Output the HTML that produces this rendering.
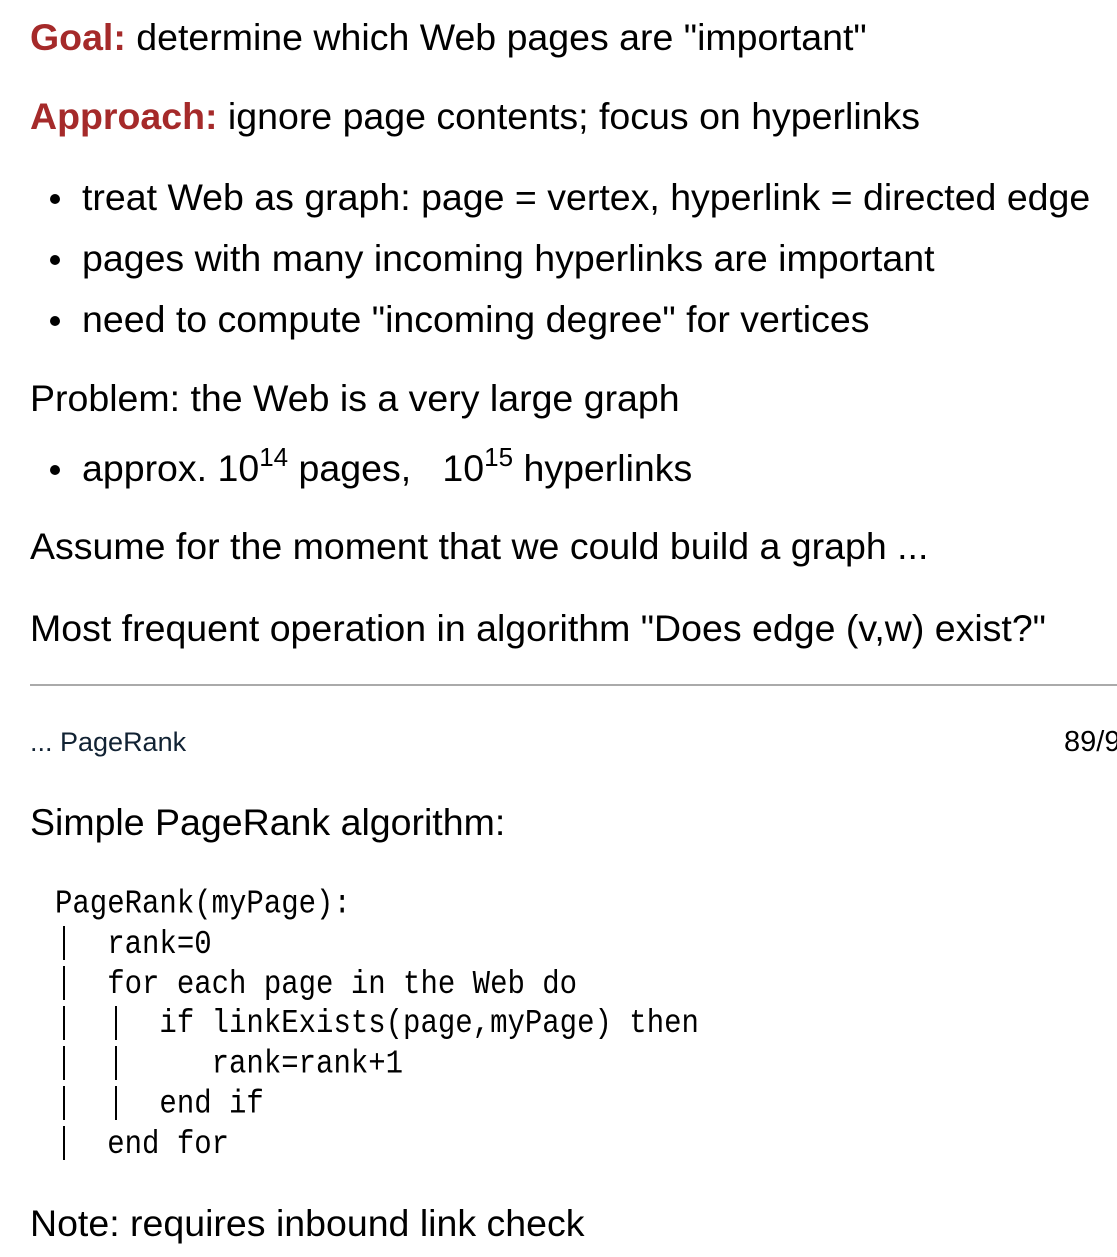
<!DOCTYPE html>
<html><head><meta charset="utf-8"><style>
html,body{margin:0;padding:0;background:#fff;width:1117px;height:1257px;overflow:hidden;position:relative}
.l{position:absolute;white-space:nowrap;font-family:"Liberation Sans","Noto Sans CJK SC",sans-serif;font-size:37.5px;line-height:40px;color:#000}
.r{color:#a52a2a;font-weight:bold}
.b{position:absolute;width:10px;height:10px;border-radius:50%;background:#000}
.c{position:absolute;white-space:pre;font-family:"Liberation Mono",monospace;font-size:29px;line-height:40px;color:#000;transform:scaleY(1.15);transform-origin:0 0}
.p{position:absolute;width:2px;height:34px;background:#000}
sup{font-size:26px;line-height:0;vertical-align:15px}
</style></head><body>
<div class="l" style="left:30px;top:17px"><span class="r">Goal:</span> determine which Web pages are "important"</div>
<div class="l" style="left:30px;top:96px"><span class="r">Approach:</span> ignore page contents; focus on hyperlinks</div>
<div class="b" style="left:50px;top:194px"></div>
<div class="l" style="left:82px;top:177px">treat Web as graph: page = vertex, hyperlink = directed edge</div>
<div class="b" style="left:50px;top:255px"></div>
<div class="l" style="left:82px;top:238px">pages with many incoming hyperlinks are important</div>
<div class="b" style="left:50px;top:316px"></div>
<div class="l" style="left:82px;top:299px">need to compute "incoming degree" for vertices</div>
<div class="l" style="left:30px;top:378px">Problem: the Web is a very large graph</div>
<div class="b" style="left:50px;top:465px"></div>
<div class="l" style="left:82px;top:448px">approx. 10<sup>14</sup> pages, &nbsp; 10<sup>15</sup> hyperlinks</div>
<div class="l" style="left:30px;top:526px">Assume for the moment that we could build a graph ...</div>
<div class="l" style="left:30px;top:608px">Most frequent operation in algorithm "Does edge (v,w) exist?"</div>
<div style="position:absolute;left:30px;right:0;top:684px;height:2px;background:#aaa"></div>
<div class="l" style="left:30px;top:727px;font-size:27px;line-height:30px;color:#123">... PageRank</div>
<div class="l" style="left:1064px;top:727px;font-size:29px;line-height:30px">89/9</div>
<div class="l" style="left:30px;top:802px">Simple PageRank algorithm:</div>
<div class="c" style="left:55px;top:885px;line-height:34.8px">PageRank(myPage):
   rank=0
   for each page in the Web do
      if linkExists(page,myPage) then
         rank=rank+1
      end if
   end for</div>
<div class="p" style="left:63px;top:926px"></div>
<div class="p" style="left:63px;top:966px"></div>
<div class="p" style="left:63px;top:1006px"></div>
<div class="p" style="left:63px;top:1046px"></div>
<div class="p" style="left:63px;top:1086px"></div>
<div class="p" style="left:63px;top:1126px"></div>
<div class="p" style="left:115px;top:1006px"></div>
<div class="p" style="left:115px;top:1046px"></div>
<div class="p" style="left:115px;top:1086px"></div>
<div class="l" style="left:30px;top:1203px">Note: requires inbound link check</div>
</body></html>
